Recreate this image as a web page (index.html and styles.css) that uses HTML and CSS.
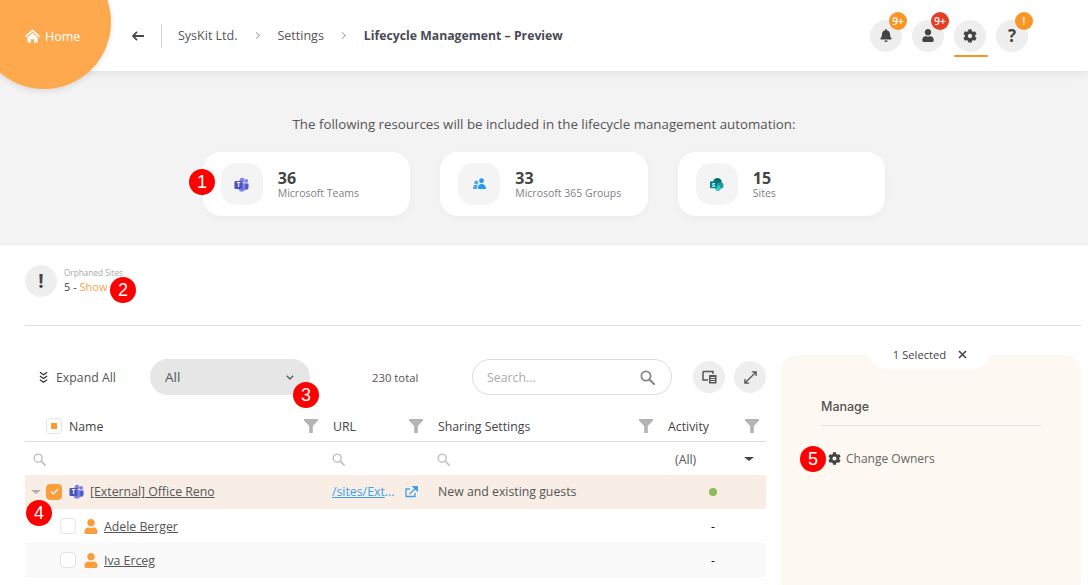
FILE: index.html
```html
<!DOCTYPE html>
<html lang="en">
<head>
    <meta charset="UTF-8">
    <title>Lifecycle Management - Preview</title>
    <link rel="stylesheet" href="styles.css">
</head>
<body>
<svg class="defs" width="0" height="0">
    <symbol id="i-bell" viewBox="0 0 448 512"><path d="M224 512c35.32 0 63.97-28.65 63.97-64H160.03c0 35.35 28.65 64 63.97 64zm215.39-149.71c-19.32-20.76-55.47-51.99-55.47-154.29 0-77.7-54.48-139.9-127.94-155.16V32c0-17.67-14.32-32-31.98-32s-31.98 14.33-31.98 32v20.84C118.56 68.1 64.08 130.3 64.08 208c0 102.3-36.15 133.53-55.47 154.29-6 6.45-8.66 14.16-8.61 21.71.11 16.4 12.98 32 32.1 32h383.8c19.12 0 32-15.6 32.1-32 .05-7.55-2.61-15.27-8.61-21.71z"/></symbol>
    <symbol id="i-user" viewBox="0 0 448 512"><path d="M224 256c70.7 0 128-57.3 128-128S294.7 0 224 0 96 57.3 96 128s57.3 128 128 128zm89.6 32h-16.7c-22.2 10.2-46.9 16-72.9 16s-50.6-5.8-72.9-16h-16.7C60.2 288 0 348.2 0 422.4V464c0 26.5 21.5 48 48 48h352c26.5 0 48-21.5 48-48v-41.6c0-74.2-60.2-134.4-134.4-134.4z"/></symbol>
    <symbol id="i-cog" viewBox="0 0 512 512"><path d="M487.4 315.7l-42.6-24.6c4.3-23.2 4.3-47 0-70.2l42.6-24.6c4.9-2.8 7.1-8.6 5.5-14-11.1-35.6-30-67.8-54.7-94.6-3.8-4.1-10-5.1-14.8-2.3L380.8 110c-17.9-15.4-38.5-27.3-60.8-35.1V25.8c0-5.6-3.9-10.5-9.4-11.7-36.7-8.2-74.3-7.8-109.2 0-5.5 1.2-9.4 6.1-9.4 11.7V75c-22.2 7.9-42.8 19.8-60.8 35.1L88.7 85.5c-4.9-2.8-11-1.9-14.8 2.3-24.7 26.7-43.6 58.9-54.7 94.6-1.7 5.4.6 11.2 5.5 14L67.3 221c-4.3 23.2-4.3 47 0 70.2l-42.6 24.6c-4.9 2.8-7.1 8.6-5.5 14 11.1 35.6 30 67.8 54.7 94.6 3.8 4.1 10 5.1 14.8 2.3l42.6-24.6c17.9 15.4 38.5 27.3 60.8 35.1v49.2c0 5.6 3.9 10.5 9.4 11.7 36.7 8.2 74.3 7.8 109.2 0 5.5-1.2 9.4-6.1 9.4-11.7v-49.2c22.2-7.9 42.8-19.8 60.8-35.1l42.6 24.6c4.9 2.8 11 1.9 14.8-2.3 24.7-26.7 43.6-58.9 54.7-94.6 1.5-5.5-.7-11.3-5.6-14.1zM256 336c-44.1 0-80-35.9-80-80s35.9-80 80-80 80 35.9 80 80-35.9 80-80 80z"/></symbol>
    <symbol id="i-filter" viewBox="0 0 14 14"><path d="M0 0h14v1.5L8.8 7v7H5.2V7L0 1.5z"/></symbol>
    <symbol id="i-search" viewBox="0 0 14 14"><circle cx="5.6" cy="5.6" r="4.3" fill="none" stroke="currentColor" stroke-width="1.7"/><path d="M8.8 8.8l4.2 4.2" stroke="currentColor" stroke-width="2" stroke-linecap="round"/></symbol>
</svg>

<header class="topbar">
    <a class="home">
        <svg class="home-icon" viewBox="0 0 16 14" width="15" height="14"><path d="M8 0L0 7l1.2 1.3L8 2.4l6.8 5.9L16 7zM8 3.8L2.6 8.5V14h3.6v-3.6h3.6V14h3.6V8.5z" fill="#fff"/></svg>
        Home
    </a>
    <svg class="back" viewBox="0 0 12 10" width="12" height="10"><path d="M5 .8L1 5l4 4.2M1.2 5H12" fill="none" stroke="#4a4a4a" stroke-width="1.8"/></svg>
    <span class="vline"></span>
    <nav class="crumbs">
        <span>SysKit Ltd.</span>
        <i class="crumb-sep"></i>
        <span>Settings</span>
        <i class="crumb-sep"></i>
        <b>Lifecycle Management – Preview</b>
    </nav>
    <div class="top-actions">
        <div class="round-btn"><svg width="12" height="13"><use href="#i-bell"/></svg><span class="badge">9+</span></div>
        <div class="round-btn"><svg width="12" height="13"><use href="#i-user"/></svg><span class="badge red">9+</span></div>
        <div class="round-btn active"><svg width="14" height="14"><use href="#i-cog"/></svg></div>
        <div class="round-btn q">?<span class="badge">!</span></div>
    </div>
</header>

<section class="summary">
    <p>The following resources will be included in the lifecycle management automation:</p>
    <div class="cards">
        <div class="card">
            <div class="card-icon">
                <svg viewBox="0 0 16 16" width="15" height="15"><circle cx="13" cy="4.2" r="2" fill="#7b83eb"/><path d="M10.5 7h5v4.2a2.4 2.4 0 0 1-4.6 1z" fill="#5059c9"/><circle cx="8.6" cy="3.4" r="2.6" fill="#7b83eb"/><path d="M5 6.6h7v5.6a3.6 3.6 0 0 1-7 1z" fill="#7b83eb"/><rect x="0.5" y="4.2" width="8.5" height="8.5" rx="1" fill="#4b53bc"/><text x="4.75" y="11" class="logo-letter">T</text></svg>
            </div>
            <div class="card-text"><div class="num">36</div><div class="lbl">Microsoft Teams</div></div>
        </div>
        <div class="card">
            <div class="card-icon"><svg viewBox="0 0 16 14" width="13" height="12"><circle cx="10.5" cy="3" r="3" fill="#2899f5"/><path d="M6 13c0-4 1.5-6 4.500-6s5.500 2 5.500 6z" fill="#2899f5"/><circle cx="4" cy="5" r="2.400" fill="#4aa8f0"/><path d="M0 13c0-3.500 1-5 4-5 1 0 1.500.2 2 .6C5 10 5 11.500 5 13z" fill="#4aa8f0"/></svg></div>
            <div class="card-text"><div class="num">33</div><div class="lbl">Microsoft 365 Groups</div></div>
        </div>
        <div class="card">
            <div class="card-icon"><svg viewBox="0 0 15 14" width="14" height="13"><circle cx="8" cy="4.500" r="4.500" fill="#036c70"/><circle cx="11" cy="8" r="3.500" fill="#1a9ba1"/><circle cx="8.500" cy="11" r="3" fill="#37c6d0"/><rect x="0" y="3.500" width="7.500" height="7.500" rx="1" fill="#038387"/><text x="3.750" y="9.500" class="logo-letter">S</text></svg></div>
            <div class="card-text"><div class="num">15</div><div class="lbl">Sites</div></div>
        </div>
    </div>
</section>

<section class="orphaned">
    <div class="warn-circle">!</div>
    <div class="orph-text">
        <div class="orph-title">Orphaned Sites</div>
        <div class="orph-count">5 - <a>Show</a></div>
    </div>
</section>
<hr class="divider">

<main class="content">
    <div class="left">
        <div class="toolbar">
            <div class="expand">
                <svg viewBox="0 0 8 11" width="9" height="13"><path d="M.8 .8L4 3l3.200-2.200M.8 4.200L4 6.400l3.200-2.200M.8 7.600L4 9.800l3.200-2.200" fill="none" stroke="#333" stroke-width="1.100"/></svg>
                Expand All
            </div>
            <div class="select">All <svg viewBox="0 0 8 5" width="8" height="5"><path d="M.8 .8L4 4l3.200-3.200" fill="none" stroke="#555" stroke-width="1.300"/></svg></div>
            <div class="total">230 total</div>
            <div class="search">Search... <svg class="search-icon" width="15" height="15"><use href="#i-search"/></svg></div>
            <div class="round-btn tool"><svg viewBox="0 0 15 14" width="15" height="14"><path d="M1 1.500h10V4M6 10H1V1.500" fill="none" stroke="#555" stroke-width="1.500"/><path d="M7 5h7.500v8.500H7z" fill="#555"/><path d="M8.500 7.500h4.500M8.500 9.500h4.500M8.500 11.500h4.500" stroke="#eee"/></svg></div>
            <div class="round-btn tool"><svg viewBox="0 0 14 14" width="13" height="13"><path d="M1 13L13 1M8.500 1H13v4.500M1 8.500V13h4.500" fill="none" stroke="#555" stroke-width="1.400"/></svg></div>
        </div>

        <div class="grid">
            <div class="row head">
                <div class="cell first"><span class="check partial"></span><span class="col-name">Name</span><svg class="filter" width="14" height="14"><use href="#i-filter"/></svg></div>
                <div class="cell"><span class="col-name">URL</span><svg class="filter" width="14" height="14"><use href="#i-filter"/></svg></div>
                <div class="cell"><span class="col-name">Sharing Settings</span><svg class="filter" width="14" height="14"><use href="#i-filter"/></svg></div>
                <div class="cell"><span class="col-name">Activity</span><svg class="filter" width="14" height="14"><use href="#i-filter"/></svg></div>
            </div>
            <div class="row filters">
                <div class="cell"><svg class="mini" width="13" height="13"><use href="#i-search"/></svg></div>
                <div class="cell"><svg class="mini" width="13" height="13"><use href="#i-search"/></svg></div>
                <div class="cell"><svg class="mini" width="13" height="13"><use href="#i-search"/></svg></div>
                <div class="cell all-cell"><div class="all-box"><span>(All)</span><i class="caret dark"></i></div></div>
            </div>
            <div class="row selected">
                <div class="cell first">
                    <i class="caret"></i>
                    <span class="check on"><svg viewBox="0 0 10 8" width="9" height="7"><path d="M1 4l2.700 2.700L9 1.200" fill="none" stroke="#fff" stroke-width="1.500"/></svg></span>
                    <svg class="row-icon" viewBox="0 0 16 16" width="15" height="15"><circle cx="13" cy="4.2" r="2" fill="#7b83eb"/><path d="M10.5 7h5v4.2a2.4 2.4 0 0 1-4.6 1z" fill="#5059c9"/><circle cx="8.6" cy="3.4" r="2.6" fill="#7b83eb"/><path d="M5 6.6h7v5.6a3.6 3.6 0 0 1-7 1z" fill="#7b83eb"/><rect x="0.5" y="4.2" width="8.5" height="8.5" rx="1" fill="#4b53bc"/><text x="4.75" y="11" class="logo-letter">T</text></svg>
                    <a class="name-link">[External] Office Reno</a>
                </div>
                <div class="cell url-cell">
                    <span class="url"><u>/sites/Ext</u>...</span>
                    <svg viewBox="0 0 13 12" width="13" height="12"><path d="M10 7v3.500H1V3h4" fill="none" stroke="#3ea1ec" stroke-width="1.300"/><path d="M4.500 8L11 2M8 0.700H12.500V5z" stroke="#3ea1ec" stroke-width="1.200" fill="#3ea1ec"/></svg>
                </div>
                <div class="cell">New and existing guests</div>
                <div class="cell center"><i class="dot"></i></div>
            </div>
            <div class="row">
                <div class="cell first child">
                    <span class="check"></span>
                    <svg class="person" width="14" height="15"><use href="#i-user"/></svg>
                    <a class="name-link">Adele Berger</a>
                </div>
                <div class="cell"></div>
                <div class="cell"></div>
                <div class="cell center">-</div>
            </div>
            <div class="row alt">
                <div class="cell first child">
                    <span class="check"></span>
                    <svg class="person" width="14" height="15"><use href="#i-user"/></svg>
                    <a class="name-link">Iva Erceg</a>
                </div>
                <div class="cell"></div>
                <div class="cell"></div>
                <div class="cell center">-</div>
            </div>
        </div>
    </div>

    <aside class="side">
        <div class="side-tab">1 Selected <svg viewBox="0 0 9 9" width="9" height="9"><path d="M1 1l7 7M8 1L1 8" stroke="#444" stroke-width="1.600"/></svg></div>
        <h4>Manage</h4>
        <div class="side-item"><svg width="13" height="13"><use href="#i-cog"/></svg>Change Owners</div>
    </aside>
</main>

<span class="pin pin1">1</span>
<span class="pin pin2">2</span>
<span class="pin pin3">3</span>
<span class="pin pin4">4</span>
<span class="pin pin5">5</span>
</body>
</html>
```

FILE: styles.css
```css
* {
    box-sizing: border-box;
}
html, body {
    margin: 0;
    height: 585px;
    overflow: hidden;
}
body {
    font-family: "Open Sans", sans-serif;
    font-size: 12.3px;
    color: #444;
    background: #fff;
    position: relative;
}
.defs {
    position: absolute;
}
.logo-letter {
    font-family: "Open Sans", sans-serif;
    font-size: 6.5px;
    font-weight: 700;
    fill: #fff;
    text-anchor: middle;
}

/* top bar */
.topbar {
    height: 71px;
    display: flex;
    align-items: center;
    padding-left: 132px;
    background: #fff;
    box-shadow: 0 2px 10px rgba(0, 0, 0, 0.08);
    position: relative;
    z-index: 2;
}
.home {
    position: absolute;
    left: -23px;
    top: -45px;
    width: 134px;
    height: 134px;
    border-radius: 50%;
    background: #ffa94f;
    box-shadow: 0 2px 6px rgba(0, 0, 0, 0.1);
    color: #fff;
    font-size: 12.5px;
    display: flex;
    align-items: center;
    gap: 5px;
    padding: 28px 0 0 48px;
}
.back {
    margin-right: 17px;
}
.vline {
    width: 1px;
    height: 24px;
    background: #d4d4d4;
    margin-right: 16px;
}
.crumbs {
    display: flex;
    align-items: center;
    font-size: 12.5px;
    color: #555;
}
.crumbs b {
    font-size: 12.25px;
    font-weight: 700;
    color: #4a4a55;
}
.crumb-sep {
    width: 5px;
    height: 5px;
    border-top: 1px solid #aaa;
    border-right: 1px solid #aaa;
    transform: rotate(45deg);
    margin: 0 19px 0 16px;
}
.top-actions {
    margin-left: auto;
    margin-right: 60px;
    display: flex;
    gap: 10px;
}
.round-btn {
    width: 32px;
    height: 32px;
    border-radius: 50%;
    background: #eeeeee;
    display: flex;
    align-items: center;
    justify-content: center;
    position: relative;
    fill: #444;
}
.round-btn.q {
    font-size: 17px;
    font-weight: 700;
    color: #444;
}
.round-btn.active::after {
    content: "";
    position: absolute;
    left: 0;
    top: 35px;
    width: 34px;
    height: 2px;
    background: #f7941d;
    border-radius: 2px;
}
.badge {
    position: absolute;
    left: 19px;
    top: -8px;
    width: 18px;
    height: 18px;
    border-radius: 50%;
    background: #fb9524;
    color: #fff;
    font-size: 10px;
    font-weight: 600;
    line-height: 18px;
    text-align: center;
}
.badge.red {
    background: #e53d26;
}

/* summary band */
.summary {
    height: 174px;
    background: #f3f3f3;
    border-bottom: 1px solid #eee;
    padding-top: 44px;
}
.summary p {
    margin: 0 0 19px;
    font-size: 13.3px;
    line-height: 18px;
    text-align: center;
    color: #555;
}
.cards {
    display: flex;
    justify-content: center;
    gap: 30px;
}
.card {
    width: 207.5px;
    height: 64px;
    background: #fff;
    border-radius: 18px;
    box-shadow: 0 2px 8px rgba(0, 0, 0, 0.03);
    display: flex;
    align-items: center;
    gap: 15px;
    padding-left: 18px;
}
.card-icon {
    width: 42px;
    height: 42px;
    border-radius: 15px;
    background: #f4f4f4;
    display: flex;
    align-items: center;
    justify-content: center;
}
.card-text {
    padding-top: 2px;
}
.num {
    font-size: 16px;
    font-weight: 700;
    line-height: 16px;
    color: #444;
}
.lbl {
    font-size: 10.5px;
    line-height: 14px;
    color: #808088;
}

/* orphaned sites */
.orphaned {
    height: 80px;
    padding: 20px 0 0 25px;
    display: flex;
    gap: 7px;
}
.warn-circle {
    width: 32px;
    height: 32px;
    border-radius: 50%;
    background: #eeeeee;
    color: #444;
    font-size: 19px;
    font-weight: 700;
    line-height: 32px;
    text-align: center;
}
.orph-title {
    font-size: 8.2px;
    line-height: 13px;
    margin-top: 1px;
    color: #aaa;
}
.orph-count {
    font-size: 11px;
    line-height: 15px;
    color: #444;
}
.orph-count a {
    color: #f7a04b;
}
.divider {
    margin: 0 7px 0 25px;
    border: 0;
    border-top: 1px solid #ddd;
}

/* main area */
.content {
    display: flex;
    align-items: flex-start;
    padding: 29px 7px 0 25px;
    gap: 15px;
}
.left {
    width: 741px;
    flex: none;
}
.toolbar {
    display: flex;
    align-items: center;
    margin-top: 4px;
    height: 36px;
}
.expand {
    width: 125px;
    padding-left: 14px;
    display: flex;
    align-items: center;
    gap: 8px;
    color: #555;
}
.select {
    width: 160px;
    height: 36px;
    border-radius: 18px;
    background: #e6e6e6;
    color: #555;
    font-size: 13.5px;
    display: flex;
    align-items: center;
    justify-content: space-between;
    padding: 0 16px 0 15px;
}
.total {
    width: 100px;
    margin-left: 62px;
    font-size: 11.3px;
    color: #555;
}
.search {
    width: 200px;
    height: 36px;
    border: 1px solid #ddd;
    border-radius: 18px;
    color: #aaa;
    display: flex;
    align-items: center;
    justify-content: space-between;
    padding: 0 16px 0 14px;
}
.search-icon {
    color: #888;
}
.tool {
    flex: none;
    margin-left: 21px;
}
.tool + .tool {
    margin-left: 9px;
}

/* grid */
.grid {
    margin-top: 15px;
}
.row {
    display: grid;
    grid-template-columns: 300px 105px 230px 106px;
    height: 34px;
    align-items: center;
    color: #555;
}
.cell {
    display: flex;
    align-items: center;
    padding-left: 8px;
    min-width: 0;
}
.cell.first {
    padding-left: 21px;
}
.cell.center {
    justify-content: center;
    padding-left: 0;
    color: #111;
}
.head {
    height: 32px;
    padding-top: 1px;
    border-bottom: 1px solid #ddd;
}
.head .cell {
    padding-right: 7px;
}
.col-name {
    color: #444;
    flex: 1;
}
.check.partial + .col-name {
    margin-left: 7px;
}
.filter {
    fill: #b4b4b4;
}
.filters {
    height: 33px;
}
.mini {
    color: #c4c4c4;
    margin: 1px 0 0 -1px;
}
.filters .cell:first-child {
    padding-left: 9px;
}
.cell.all-cell {
    padding: 0;
    align-self: stretch;
}
.all-box {
    width: 100%;
    height: 100%;
    display: flex;
    align-items: center;
    justify-content: space-between;
    padding: 1px 12px 0 15px;
    border-radius: 14px;
    color: #555;
    box-shadow: inset 0 0 2px #f6f6f6;
}
.caret {
    width: 0;
    height: 0;
    border: 5px solid transparent;
    border-top: 4px solid #b0b0b0;
    border-bottom: 0;
}
.caret.dark {
    border-top-color: #444;
}
.check {
    width: 16px;
    height: 16px;
    flex: none;
    border: 1px solid #e4e4e4;
    border-radius: 4px;
    background: #fff;
    display: flex;
    align-items: center;
    justify-content: center;
}
.check.partial::after {
    content: "";
    width: 6px;
    height: 6px;
    background: #fb9a33;
}
.check.on {
    background: #fb9d3b;
    border-color: #fb9d3b;
    margin-left: 5px;
}
.selected {
    background: #f8eee5;
    padding-bottom: 1px;
}
.selected .cell.first {
    padding-left: 6px;
}
.row-icon {
    margin: 0 6px 0 7px;
    flex: none;
}
.name-link {
    color: #555;
    text-decoration: underline;
    white-space: nowrap;
}
.url-cell {
    gap: 10px;
    padding-left: 7px;
}
.url {
    color: #3ea1ec;
}
.dot {
    width: 8px;
    height: 8px;
    border-radius: 50%;
    background: #8fbc5a;
}
.child {
    padding-left: 35px !important;
}
.person {
    fill: #fb9d3b;
    margin: 0 6px 0 8px;
    flex: none;
}
.alt {
    background: #f9f9f9;
}

/* right panel */
.side {
    flex: 1;
    height: 240px;
    background: #fef8f2;
    border-radius: 16px;
    padding: 0 40px;
    position: relative;
}
.side-tab {
    position: absolute;
    left: 89px;
    top: -11px;
    width: 120px;
    height: 25px;
    padding-bottom: 4px;
    background: #fff;
    border-radius: 0 0 15px 15px;
    display: flex;
    align-items: center;
    justify-content: center;
    gap: 12px;
    font-size: 11.2px;
    color: #444;
}
.side h4 {
    margin: 0;
    padding: 43px 0 9px;
    border-bottom: 1px solid #e4dedc;
    font-family: Inter, sans-serif;
    font-size: 12.5px;
    font-weight: 500;
    line-height: 18px;
    color: #555;
}
.side-item {
    margin: 24px 0 0 7px;
    display: flex;
    align-items: center;
    gap: 5px;
    font-size: 12px;
    color: #666;
    fill: #444;
}

/* numbered pins */
.pin {
    position: absolute;
    width: 26px;
    height: 26px;
    border-radius: 50%;
    background: #fe0000;
    color: #fff;
    font-family: "Liberation Sans", sans-serif;
    font-size: 18px;
    line-height: 26px;
    text-align: center;
    z-index: 5;
}
.pin1 { left: 189px; top: 169px; }
.pin2 { left: 110px; top: 277px; }
.pin3 { left: 293px; top: 382px; }
.pin4 { left: 26px; top: 500px; }
.pin5 { left: 800px; top: 446px; }
```
